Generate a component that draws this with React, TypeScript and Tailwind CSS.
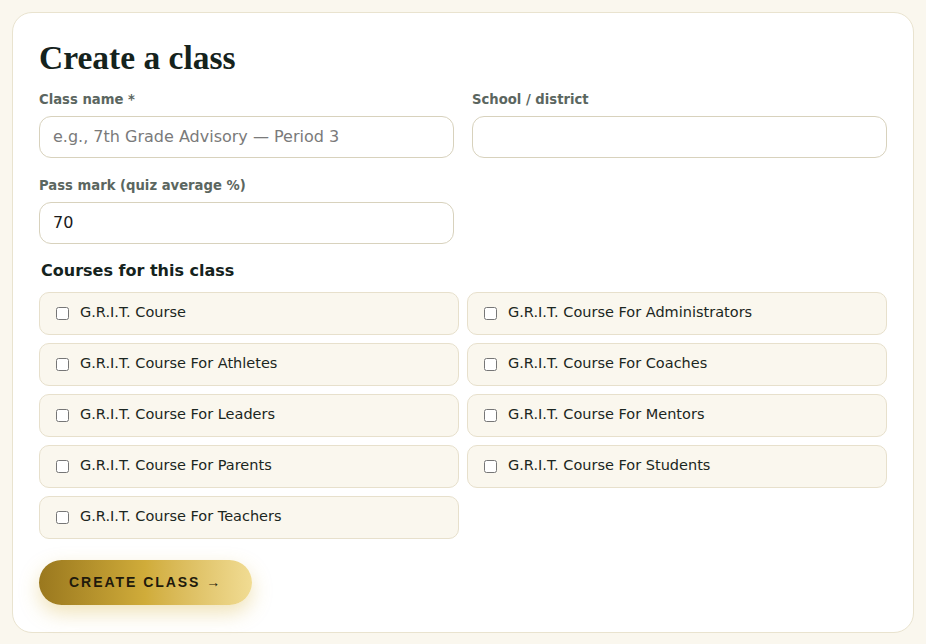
import React, { useState } from "react"

const courses = [
  "G.R.I.T. Course",
  "G.R.I.T. Course For Administrators",
  "G.R.I.T. Course For Athletes",
  "G.R.I.T. Course For Coaches",
  "G.R.I.T. Course For Leaders",
  "G.R.I.T. Course For Mentors",
  "G.R.I.T. Course For Parents",
  "G.R.I.T. Course For Students",
  "G.R.I.T. Course For Teachers",
]

export default function App() {
  const [name, setName] = useState("")
  const [school, setSchool] = useState("")
  const [pass, setPass] = useState("70")
  const [picked, setPicked] = useState<string[]>([])

  const toggle = (c: string) =>
    setPicked((p) => (p.includes(c) ? p.filter((x) => x !== c) : [...p, c]))

  return (
    <div className="min-h-screen bg-[#faf7ee] p-3 font-['DejaVu_Sans',sans-serif]">
      <div className="bg-white border border-[#e9e3cf] rounded-[20px] px-[26px] pt-[26px] pb-[27px]">
        <h1 className="font-['Liberation_Serif',serif] font-bold text-[33.5px] leading-[38px] text-[#15231d]">
          Create a class
        </h1>

        {/* Name + school */}
        <div className="grid grid-cols-2 gap-x-[18px] mt-[13px]">
          <div className="flex flex-col gap-[6px]">
            <label className="text-[13.2px] font-bold text-[#5b6660]">Class name *</label>
            <input
              value={name}
              onChange={(e) => setName(e.target.value)}
              placeholder="e.g., 7th Grade Advisory — Period 3"
              className="h-[42px] w-full rounded-[12px] border border-[#d8d2bd] px-[13px] text-[16px] text-[#1a1a1a] placeholder:text-[#7a7a7a] outline-none"
            />
          </div>
          <div className="flex flex-col gap-[6px]">
            <label className="text-[13.2px] font-bold text-[#5b6660]">School / district</label>
            <input
              value={school}
              onChange={(e) => setSchool(e.target.value)}
              className="h-[42px] w-full rounded-[12px] border border-[#d8d2bd] px-[13px] text-[16px] text-[#1a1a1a] outline-none"
            />
          </div>
        </div>

        {/* Pass mark */}
        <div className="grid grid-cols-2 gap-x-[18px] mt-[18px]">
          <div className="flex flex-col gap-[6px]">
            <label className="text-[13.2px] font-bold text-[#5b6660]">Pass mark (quiz average %)</label>
            <input
              value={pass}
              onChange={(e) => setPass(e.target.value)}
              className="h-[42px] w-full rounded-[12px] border border-[#d8d2bd] px-[13px] text-[16px] text-[#1a1a1a] outline-none"
            />
          </div>
        </div>

        {/* Courses */}
        <h3 className="mt-[15px] ml-[2px] text-[16px] font-bold text-[#15231d]">Courses for this class</h3>
        <div className="grid grid-cols-2 gap-x-[8px] gap-y-[8px] mt-[9px]">
          {courses.map((c) => (
            <label
              key={c}
              className="flex items-center gap-[11px] h-[43px] px-[16px] rounded-[10px] border border-[#e7e0cc] bg-[#faf7ee] text-[14.5px] text-[#1b2621] cursor-pointer"
            >
              <input
                type="checkbox"
                checked={picked.includes(c)}
                onChange={() => toggle(c)}
                className="w-[13px] h-[13px] m-0"
              />
              <span>{c}</span>
            </label>
          ))}
        </div>

        <button
          type="button"
          className="mt-[21px] h-[45px] px-[30px] rounded-full bg-gradient-to-r from-[#9a781e] via-[#d0ac3a] to-[#f1dc93] shadow-[0_8px_20px_rgba(212,175,55,0.35)] font-['Liberation_Sans',sans-serif] font-bold text-[14px] tracking-[0.14em] text-[#1f1a0c]"
        >
          CREATE CLASS →
        </button>
      </div>
    </div>
  )
}
